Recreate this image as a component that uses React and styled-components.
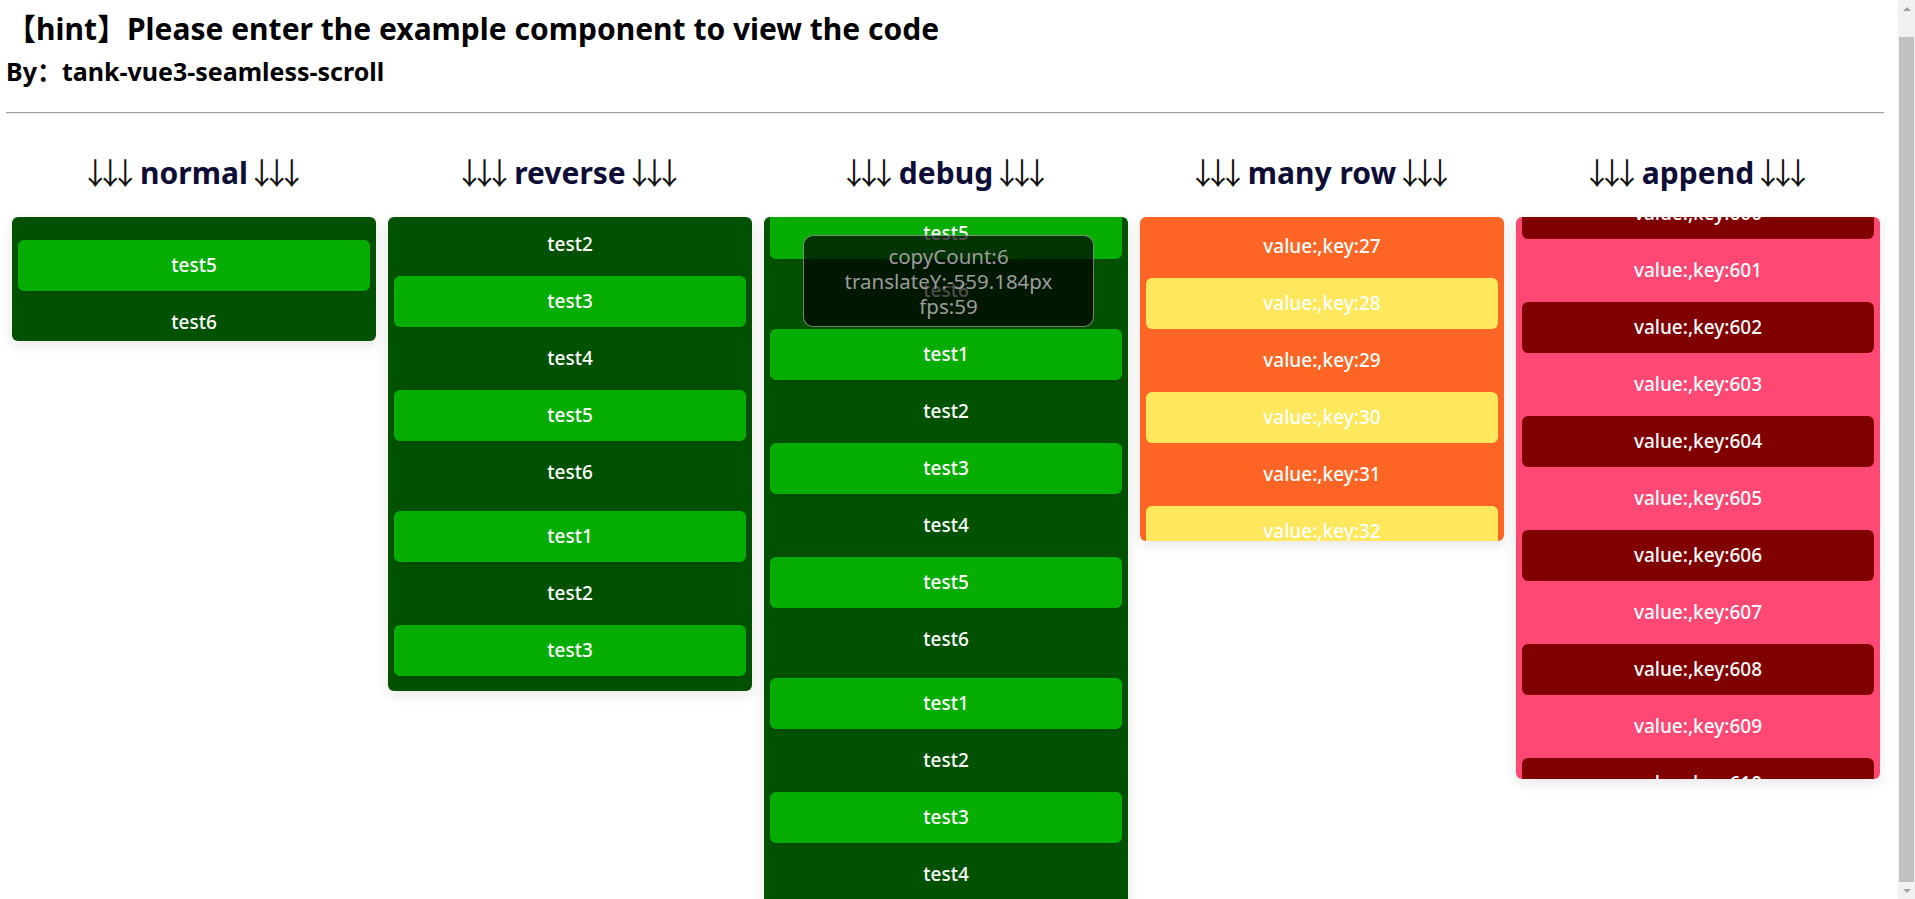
import React from 'react'
import styled, { createGlobalStyle } from 'styled-components'

const GlobalStyle = createGlobalStyle`
  body {
    margin: 0;
    font-family: "Noto Sans", "Noto Sans CJK SC", sans-serif;
    background: #fff;
    color: #000;
  }
`

const Shell = styled.div`
  display: flex;
  height: 100vh;
  overflow: hidden;
`

const Page = styled.div`
  flex: 1;
  min-width: 0;
  padding: 11px 0 24px 0;
`

const ScrollRail = styled.div`
  flex: none;
  width: 17px;
  display: flex;
  flex-direction: column;
  align-items: center;
  background: #f1f1f1;
`

const RailButton = styled.div`
  flex: none;
  height: 17px;
  width: 17px;
  display: flex;
  align-items: center;
  justify-content: center;

  &::after {
    content: '';
    border-left: 4px solid transparent;
    border-right: 4px solid transparent;
    ${p => (p.$down ? 'border-top: 4px solid #a3a3a3;' : 'border-bottom: 4px solid #a3a3a3;')}
  }
`

const RailTrack = styled.div`
  flex: 1;
  width: 100%;
  display: flex;
  flex-direction: column;
  align-items: center;
`

const RailThumb = styled.div`
  margin-top: 20px;
  width: 15px;
  height: 845px;
  background: #c1c1c1;
`

const Header = styled.header`
  padding: 0 14px 0 6px;
`

const Title = styled.h2`
  margin: 0;
  font-size: 30px;
  line-height: 36px;
  font-weight: 700;
`

const Sub = styled.h3`
  margin: 9px 0 0 0;
  font-size: 25px;
  line-height: 30px;
  font-weight: 700;
`

const Rule = styled.hr`
  margin: 26px 0 0 0;
  height: 0;
  border: none;
  border-top: 1px solid #9e9e9e;
  border-bottom: 1px solid #ececec;
`

const Columns = styled.main`
  display: flex;
  align-items: flex-start;
  gap: 12px;
  padding: 37px 0 0 12px;
`

const Column = styled.section`
  width: 364px;
  flex: none;
`

const Heading = styled.h2`
  margin: 0 0 24px 0;
  text-align: center;
  font-size: 30px;
  line-height: 40px;
  font-weight: 700;
  color: #0d0d35;
`

const Arrows = styled.span`
  font-family: "Noto Sans CJK SC", sans-serif;
  font-weight: 400;
  letter-spacing: -15px;
  margin-left: -9px;
  margin-right: 7px;
  color: #111;
`

const Box = styled.div`
  position: relative;
  height: ${p => p.$height}px;
  overflow: hidden;
  border-radius: 6px;
  background: ${p => p.$bg};
  box-shadow: 0 4px 14px rgba(0, 0, 0, 0.1);
`

const Track = styled.div`
  margin-top: ${p => p.$offset}px;
`

const Copy = styled.ul`
  list-style: none;
  margin: 0;
  padding: 0 6px 7px 6px;
`

const Item = styled.li`
  height: 51px;
  margin-bottom: 6px;
  border-radius: 6px;
  line-height: 51px;
  text-align: center;
  font-size: 19px;
  font-weight: 500;
  color: #fff;
  background: ${p => (p.$on ? p.$accent : 'transparent')};
  box-shadow: ${p => (p.$shadow ? '0 2px 4px rgba(0, 0, 0, 0.08)' : 'none')};
`

const DebugPanel = styled.div`
  position: absolute;
  left: 39px;
  top: 18px;
  width: 289px;
  height: 90px;
  border: 1px solid rgba(255, 255, 255, 0.45);
  border-radius: 10px;
  background: rgba(0, 0, 0, 0.7);
  display: flex;
  flex-direction: column;
  justify-content: center;
  align-items: center;
  color: #9c9c9c;
  font-size: 20.5px;
  line-height: 25px;
`

const tests = [1, 2, 3, 4, 5, 6].map(n => ({ label: `test${n}`, on: n % 2 === 1 }))

const range = (from, to) => {
  const out = []
  for (let i = from; i <= to; i++) out.push(i)
  return out
}

const examples = [
  {
    name: 'normal',
    height: 124,
    bg: '#005200',
    accent: '#05ad00',
    offset: -34,
    copies: [tests.slice(3)],
  },
  {
    name: 'reverse',
    height: 474,
    bg: '#005200',
    accent: '#05ad00',
    offset: 2,
    copies: [tests.slice(1), tests],
  },
  {
    name: 'debug',
    height: 700,
    bg: '#005200',
    accent: '#05ad00',
    offset: -9,
    copies: [tests.slice(4), tests, tests],
    debug: { copyCount: 6, translateY: '-559.184px', fps: 59 },
  },
  {
    name: 'many row',
    height: 324,
    bg: '#ff6626',
    accent: '#ffe85d',
    offset: 4,
    flat: true,
    copies: [range(27, 33).map(k => ({ label: `value:,key:${k}`, on: k % 2 === 0 }))],
  },
  {
    name: 'append',
    height: 562,
    bg: '#ff4874',
    accent: '#800000',
    offset: -29,
    flat: true,
    copies: [range(600, 610).map(k => ({ label: `value:,key:${k}`, on: k % 2 === 0 }))],
  },
]

const Example = ({ ex }) => (
  <Column>
    <Heading>
      <Arrows>↓↓↓</Arrows> {ex.name} <Arrows>↓↓↓</Arrows>
    </Heading>
    <Box $height={ex.height} $bg={ex.bg}>
      <Track $offset={ex.offset}>
        {ex.copies.map((list, i) => (
          <Copy key={i}>
            {list.map(it => (
              <Item key={it.label} $on={it.on} $accent={ex.accent} $shadow={!ex.flat}>
                {it.label}
              </Item>
            ))}
          </Copy>
        ))}
      </Track>
      {ex.debug && (
        <DebugPanel>
          <div>copyCount:{ex.debug.copyCount}</div>
          <div>translateY:{ex.debug.translateY}</div>
          <div>fps:{ex.debug.fps}</div>
        </DebugPanel>
      )}
    </Box>
  </Column>
)

export default function App() {
  return (
    <Shell>
      <GlobalStyle />
      <Page>
        <Header>
          <Title>【hint】Please enter the example component to view the code</Title>
          <Sub>By：tank-vue3-seamless-scroll</Sub>
          <Rule />
        </Header>
        <Columns>
          {examples.map(ex => (
            <Example key={ex.name} ex={ex} />
          ))}
        </Columns>
      </Page>
      <ScrollRail>
        <RailButton />
        <RailTrack>
          <RailThumb />
        </RailTrack>
        <RailButton $down />
      </ScrollRail>
    </Shell>
  )
}
